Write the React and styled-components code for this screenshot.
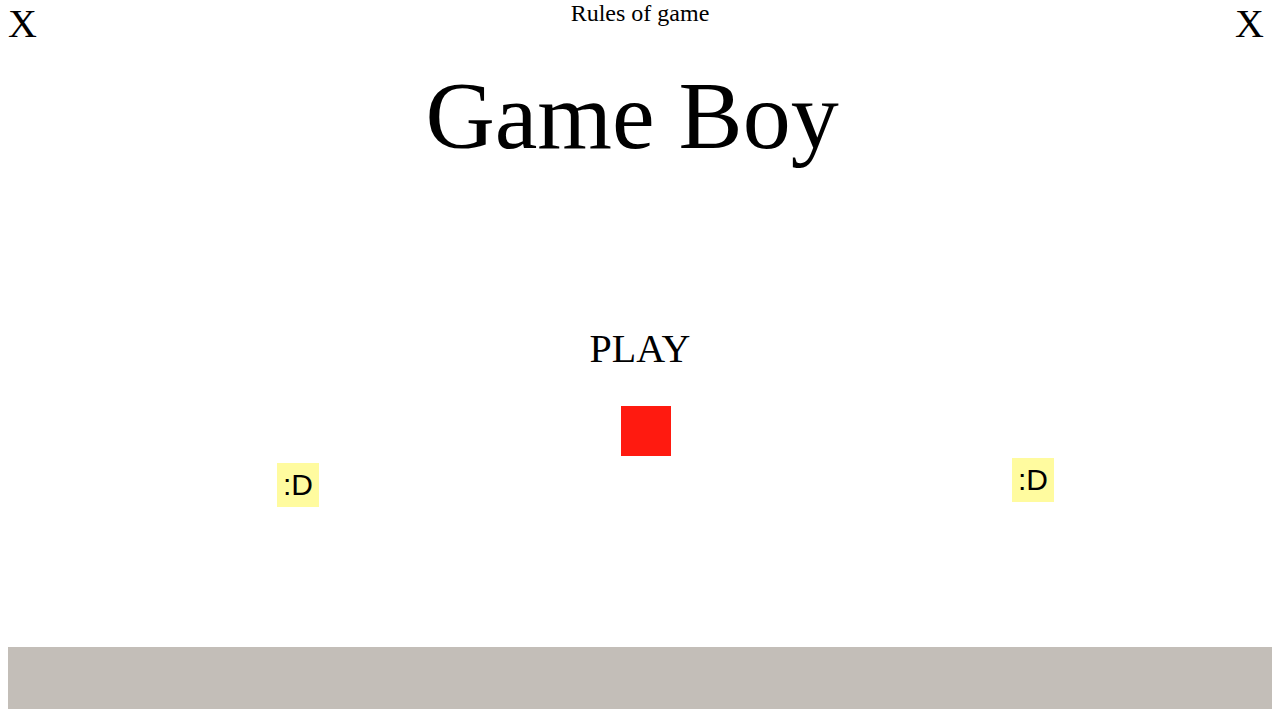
import React from 'react';
import styled, { createGlobalStyle } from 'styled-components';

const GlobalStyle = createGlobalStyle`
  html, body {
    margin: 0;
    padding: 0;
    background: #fff;
  }
  body {
    font-family: "Liberation Serif", "Times New Roman", serif;
    color: #000;
  }
`;

const Page = styled.div`
  height: 100vh;
  padding: 0 8px;
  box-sizing: border-box;
  display: flex;
  flex-direction: column;
  overflow: hidden;
`;

const Header = styled.header`
  display: grid;
  grid-template-columns: 1fr auto 1fr;
  align-items: start;
  height: 45px;
`;

const CloseButton = styled.button`
  font-family: inherit;
  font-size: 40px;
  line-height: normal;
  background: none;
  border: none;
  padding: 0;
  color: #000;
  cursor: pointer;
  justify-self: ${(props) => (props.right ? 'end' : 'start')};
  margin-right: ${(props) => (props.right ? '8px' : '0')};
`;

const RulesLink = styled.a`
  font-size: 24px;
  line-height: normal;
  color: #000;
  text-decoration: none;
  cursor: pointer;
`;

const Title = styled.h1`
  margin: 15px 16px 0 0;
  font-size: 96px;
  font-weight: 400;
  line-height: normal;
  text-align: center;
`;

const PlayButton = styled.button`
  align-self: center;
  margin-top: 154px;
  font-family: inherit;
  font-size: 40px;
  line-height: normal;
  background: none;
  border: none;
  padding: 0;
  color: #000;
  cursor: pointer;
`;

const Field = styled.div`
  position: relative;
  flex: 1;
`;

const Player = styled.div`
  position: absolute;
  left: ${(props) => props.x}px;
  top: ${(props) => props.y}px;
  width: 50px;
  height: 50px;
  background: #ff1a10;
`;

const Smiley = styled.div`
  position: absolute;
  left: ${(props) => props.x}px;
  top: ${(props) => props.y}px;
  padding: 5px 6px;
  background: #fffb9f;
  font-family: "Liberation Sans", Arial, sans-serif;
  font-size: 30px;
  line-height: normal;
`;

const Ground = styled.div`
  height: 62px;
  margin-bottom: 10px;
  background: #c3beb8;
  flex-shrink: 0;
`;

const enemies = [
  { id: 1, x: 269, y: 91 },
  { id: 2, x: 1004, y: 86 },
];

export default function App() {
  return (
    <>
      <GlobalStyle />
      <Page>
        <Header>
          <CloseButton aria-label="Close">X</CloseButton>
          <RulesLink>Rules of game</RulesLink>
          <CloseButton right aria-label="Close">X</CloseButton>
        </Header>
        <Title>Game Boy</Title>
        <PlayButton>PLAY</PlayButton>
        <Field>
          <Player x={613} y={34} />
          {enemies.map((e) => (
            <Smiley key={e.id} x={e.x} y={e.y}>:D</Smiley>
          ))}
        </Field>
        <Ground />
      </Page>
    </>
  );
}
